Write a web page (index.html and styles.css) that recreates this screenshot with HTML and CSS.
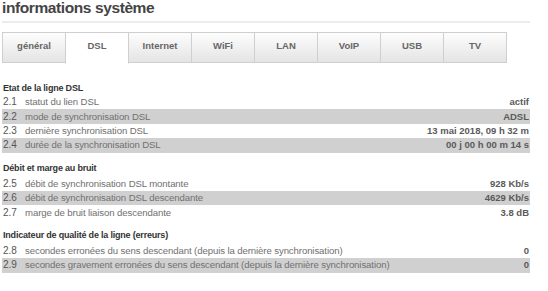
FILE: index.html
```html
<!DOCTYPE html>
<html lang="fr">
<head>
<meta charset="utf-8">
<title>informations système</title>
<link rel="stylesheet" href="styles.css">
</head>
<body>
<div class="page">
  <h1 class="title">informations système</h1>
  <div class="rule"></div>
  <nav class="tabs">
    <div class="tab">général</div>
    <div class="tab active">DSL</div>
    <div class="tab">Internet</div>
    <div class="tab">WiFi</div>
    <div class="tab">LAN</div>
    <div class="tab">VoIP</div>
    <div class="tab">USB</div>
    <div class="tab">TV</div>
  </nav>

  <section class="group first">
    <h2 class="group-title">Etat de la ligne DSL</h2>
    <div class="row"><span class="num">2.1</span><span class="label">statut du lien DSL</span><span class="value">actif</span></div>
    <div class="row alt"><span class="num">2.2</span><span class="label">mode de synchronisation DSL</span><span class="value">ADSL</span></div>
    <div class="row"><span class="num">2.3</span><span class="label">dernière synchronisation DSL</span><span class="value">13 mai 2018, 09 h 32 m</span></div>
    <div class="row alt"><span class="num">2.4</span><span class="label">durée de la synchronisation DSL</span><span class="value">00 j 00 h 00 m 14 s</span></div>
  </section>

  <section class="group">
    <h2 class="group-title">Débit et marge au bruit</h2>
    <div class="row"><span class="num">2.5</span><span class="label">débit de synchronisation DSL montante</span><span class="value">928 Kb/s</span></div>
    <div class="row alt"><span class="num">2.6</span><span class="label">débit de synchronisation DSL descendante</span><span class="value">4629 Kb/s</span></div>
    <div class="row"><span class="num">2.7</span><span class="label">marge de bruit liaison descendante</span><span class="value">3.8 dB</span></div>
  </section>

  <section class="group">
    <h2 class="group-title">Indicateur de qualité de la ligne (erreurs)</h2>
    <div class="row"><span class="num">2.8</span><span class="label">secondes erronées du sens descendant (depuis la dernière synchronisation)</span><span class="value">0</span></div>
    <div class="row alt"><span class="num">2.9</span><span class="label">secondes gravement erronées du sens descendant (depuis la dernière synchronisation)</span><span class="value">0</span></div>
  </section>
</div>
</body>
</html>
```

FILE: styles.css
```css
html, body {
  margin: 0;
  padding: 0;
  background: #ffffff;
}

body {
  font-family: "Liberation Sans", Arial, sans-serif;
  font-size: 10px;
  color: #666666;
}

.page {
  width: 528px;
  padding: 0 0 0 2px;
}

.title {
  margin: 0;
  font-size: 15.5px;
  line-height: 16px;
  letter-spacing: -0.4px;
  font-weight: bold;
  color: #444444;
}

.rule {
  height: 2px;
  background: #ececec;
  margin-top: 5px;
}

.tabs {
  display: flex;
  margin-top: 9px;
  height: 30px;
}

.tab {
  width: 62px;
  height: 29px;
  border: 1px solid #cfcfcf;
  background: linear-gradient(#fdfdfd, #e4e4e4);
  font-size: 9.5px;
  font-weight: bold;
  color: #666666;
  text-align: center;
  line-height: 25px;
  margin-left: -1px;
}

.tab:first-child {
  margin-left: 0;
}

.tab.active {
  background: #ffffff;
  border-bottom-color: #ffffff;
  height: 30px;
  position: relative;
  z-index: 1;
}

.group {
  margin-top: 9px;
}

.group.first {
  margin-top: 20px;
}

.group-title {
  margin: 0 0 2px 1px;
  font-size: 9px;
  line-height: 13px;
  letter-spacing: -0.2px;
  font-weight: bold;
  color: #333333;
}

.group.first .group-title {
  margin-bottom: 0;
}

.row {
  display: flex;
  align-items: center;
  height: 14.4px;
  line-height: 14px;
  padding-right: 1px;
}

.row.alt {
  background: #d0d0d0;
}

.num {
  width: 22px;
  padding-left: 1px;
  color: #555555;
  font-size: 10px;
}

.label {
  flex: 1;
  font-size: 9.6px;
  color: #707070;
  letter-spacing: -0.1px;
}

.value {
  font-weight: bold;
  font-size: 9.5px;
  color: #5a5a5a;
  text-align: right;
}
```
